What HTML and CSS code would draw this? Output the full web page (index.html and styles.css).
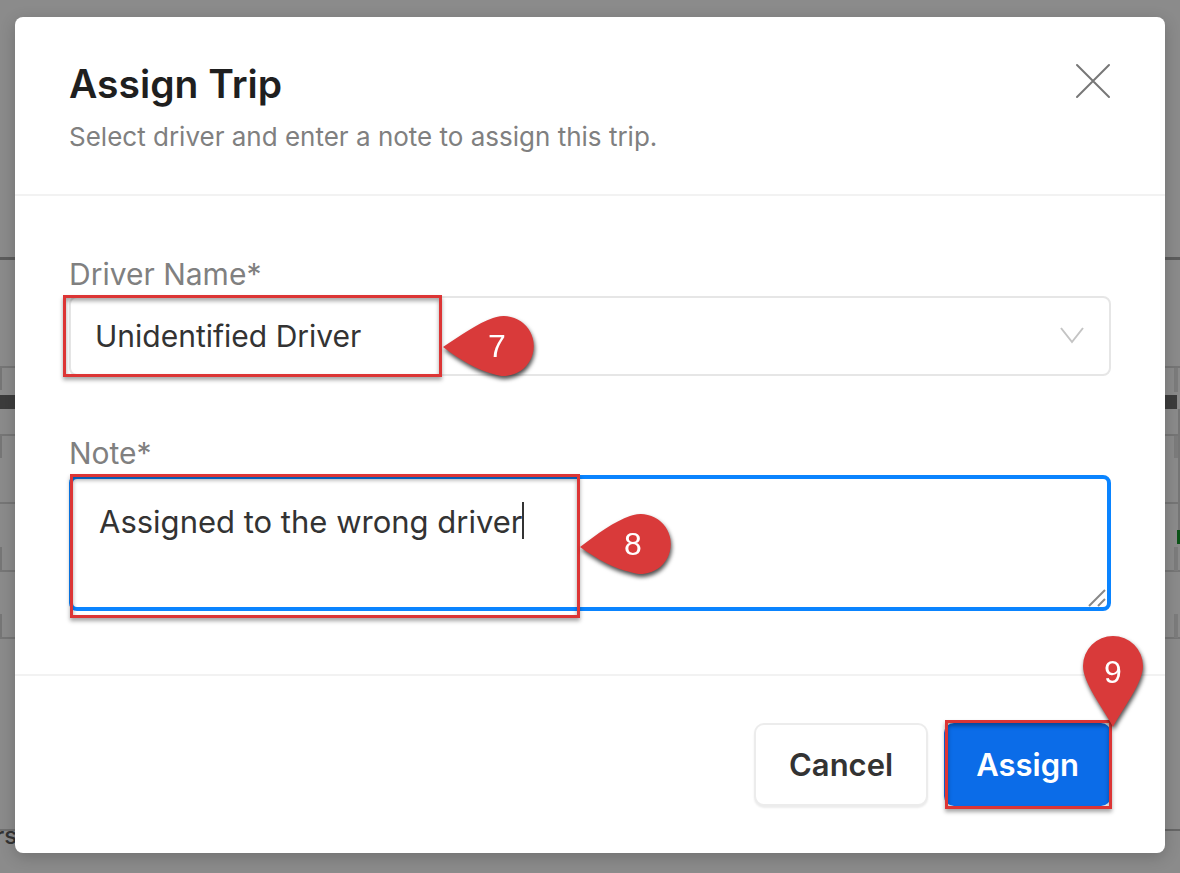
FILE: index.html
```html
<!DOCTYPE html>
<html lang="en">
<head>
<meta charset="utf-8">
<title>Assign Trip</title>
<link rel="stylesheet" href="styles.css">
</head>
<body>
<div class="backdrop" aria-hidden="true">
  <svg class="strip strip-left" width="16" height="873" viewBox="0 0 16 873">
    <g fill="#767676">
      <path d="M0 257h16v3H0z" fill="#5c5c5c"/>
      <path d="M0 366h16v2H0zM0 434h16v2H0zM0 502h16v2H0zM0 570h16v2H0zM0 637h16v2H0z"/>
      <path d="M0 368h2v22H0zM0 436h2v22H0zM0 547h2v24H0zM0 614h2v24H0z"/>
      <path d="M0 395h16v14H0z" fill="#3c3c3c"/>
      <path d="M0 829h16v2H0z" fill="#707070"/>
    </g>
  </svg>
  <span class="clipped-text">rs</span>
  <svg class="strip strip-right" width="16" height="873" viewBox="0 0 16 873">
    <g fill="#767676">
      <path d="M0 257h16v3H0z" fill="#5c5c5c"/>
      <path d="M0 366h16v2H0zM0 434h16v2H0zM0 502h16v2H0zM0 570h16v2H0zM0 637h16v2H0z"/>
      <path d="M10 368h4v24h-4zM10 436h4v22h-4zM10 547h4v24h-4zM10 614h4v24h-4z" fill="#7c7c7c"/>
      <path d="M14 409h2v121h-2z"/>
      <path d="M0 395h13v14H0z" fill="#3c3c3c"/>
      <path d="M13 530h3v14h-3z" fill="#0c5418"/>
      <path d="M0 829h16v2H0z" fill="#666"/>
    </g>
  </svg>
</div>

<form class="modal" role="dialog" aria-labelledby="title">
  <header class="modal-header">
    <div class="heading">
      <h1 class="title" id="title">Assign Trip</h1>
      <p class="subtitle">Select driver and enter a note to assign this trip.</p>
    </div>
    <button class="close" type="button" aria-label="Close">
      <svg width="36" height="36" viewBox="0 0 36 36" fill="none" stroke="#777" stroke-width="2" stroke-linecap="round"><path d="M2 2l32 32M34 2L2 34"/></svg>
    </button>
  </header>

  <div class="modal-body">
    <div class="field">
      <label class="label" for="driver">Driver Name*</label>
      <div class="control">
        <select class="select" id="driver"><option>Unidentified Driver</option></select>
        <svg class="chevron" width="24" height="18" viewBox="0 0 24 18" fill="none" stroke="#c4c4c4" stroke-width="2"><path d="M1 1l11 14L23 1"/></svg>
        <div class="outline outline-driver"></div>
        <svg class="pin pin-driver" width="96" height="68" viewBox="0 0 96 68">
          <path d="M1 33C18 22 36 9 51 4A30 30 0 1 1 51 60C36 56 18 46 1 33z" fill="#d93a3a"/>
          <text class="pin-text" x="55" y="43">7</text>
        </svg>
      </div>
    </div>
    <div class="field">
      <label class="label" for="note">Note*</label>
      <div class="control">
        <textarea class="textarea" id="note">Assigned to the wrong driver</textarea>
        <span class="caret"></span>
        <svg class="grip" width="18" height="18" viewBox="0 0 18 18" fill="none" stroke="#888" stroke-width="2"><path d="M1 17L17 1M10 17l7-7"/></svg>
        <div class="outline outline-note"></div>
        <svg class="pin pin-note" width="96" height="68" viewBox="0 0 96 68">
          <path d="M1 35C18 22 36 9 51 4A30 30 0 1 1 51 60C36 57 18 47 1 35z" fill="#d93a3a"/>
          <text class="pin-text" x="54" y="43">8</text>
        </svg>
      </div>
    </div>
  </div>

  <footer class="modal-footer">
    <button class="button" type="button">Cancel</button>
    <div class="control">
      <button class="button button-primary" type="submit">Assign</button>
      <div class="outline outline-assign"></div>
      <svg class="pin pin-assign" width="68" height="96" viewBox="0 0 68 96">
        <path d="M34 94C24 75 4 50 4 33A30 30 0 1 1 64 33C64 50 44 75 34 94z" fill="#d93a3a"/>
        <text class="pin-text" x="34" y="50">9</text>
      </svg>
    </div>
  </footer>
</form>
</body>
</html>
```
FILE: styles.css
```css
* {
  box-sizing: border-box;
}

body {
  margin: 0;
  min-height: 100vh;
  padding: 17px 15px 20px;
  background: #8b8b8b;
  color: #333;
  font-family: Inter, "Liberation Sans", sans-serif;
  overflow: hidden;
}

.backdrop {
  position: absolute;
  inset: 0;
  overflow: hidden;
}

.strip {
  position: absolute;
  top: 0;
}

.strip-left {
  left: 0;
}

.strip-right {
  right: 0;
}

.clipped-text {
  position: absolute;
  top: 820px;
  left: -5px;
  color: #333;
  font-size: 24px;
  font-weight: 500;
  line-height: 32px;
}

.modal {
  position: relative;
  background: #fff;
  border-radius: 8px;
  box-shadow: 0 4px 16px rgba(0, 0, 0, 0.2);
}

.modal-header {
  display: flex;
  justify-content: space-between;
  align-items: flex-start;
  padding: 43px 54px 39px;
  border-bottom: 2px solid #f2f2f2;
}

.heading {
  display: flex;
  flex-direction: column;
  gap: 11px;
}

.title {
  margin: 0;
  color: #1f1f1f;
  font-size: 39px;
  font-weight: 600;
  line-height: 48px;
}

.subtitle {
  margin: 0;
  color: #808080;
  font-size: 26px;
  line-height: 36px;
}

.close {
  display: flex;
  padding: 3px 0 0;
  border: 0;
  background: none;
}

.modal-body {
  display: flex;
  flex-direction: column;
  gap: 57px;
  padding: 58px 54px 63px;
}

.field {
  display: flex;
  flex-direction: column;
  gap: 2px;
}

.label {
  color: #808080;
  font-size: 30px;
  line-height: 40px;
}

.control {
  position: relative;
  display: flex;
}

.select,
.textarea {
  width: 100%;
  margin: 0;
  background: #fff;
  color: #333;
  font-family: inherit;
  font-size: 30px;
  border-radius: 8px;
  outline: none;
}

.select {
  appearance: none;
  height: 80px;
  padding: 0 24px;
  border: 2px solid #e6e6e6;
}

.textarea {
  height: 136px;
  padding: 23px 26px;
  border: 4px solid #0a84ff;
  font-size: 31px;
  line-height: 40px;
  resize: none;
}

.chevron {
  position: absolute;
  top: 31px;
  right: 27px;
}

.caret {
  position: absolute;
  top: 27px;
  left: 453px;
  width: 2px;
  height: 37px;
  background: #333;
}

.grip {
  position: absolute;
  right: 5px;
  bottom: 4px;
}

.modal-footer {
  display: flex;
  justify-content: flex-end;
  gap: 16px;
  padding: 47px 54px 47px;
  border-top: 2px solid #f2f2f2;
}

.button {
  height: 83px;
  padding: 0 33px;
  border: 2px solid #ececec;
  border-radius: 10px;
  background: #fff;
  box-shadow: 0 2px 2px rgba(0, 0, 0, 0.08);
  color: #333;
  font-family: inherit;
  font-size: 31px;
  font-weight: 600;
}

.button-primary {
  padding: 0 30px;
  border-color: #0b6ce8;
  background: #0b6ce8;
  color: #fff;
}

.outline {
  position: absolute;
  border: 3px solid #dc3535;
  box-shadow: 0 3px 4px rgba(0, 0, 0, 0.35), inset 0 3px 4px rgba(0, 0, 0, 0.35);
  pointer-events: none;
}

.outline-driver {
  top: -1px;
  left: -6px;
  width: 379px;
  height: 82px;
}

.outline-note {
  top: -1px;
  left: 1px;
  width: 510px;
  height: 144px;
}

.outline-assign {
  inset: -3px -1px -3px 1px;
}

.pin {
  position: absolute;
  overflow: visible;
  filter: drop-shadow(1px 3px 2px rgba(0, 0, 0, 0.7));
  pointer-events: none;
}

.pin-driver {
  top: 18px;
  left: 373px;
}

.pin-note {
  top: 37px;
  left: 510px;
}

.pin-assign {
  top: -90px;
  right: -36px;
}

.pin-text {
  fill: #fff;
  font-family: "Liberation Sans", Arial, sans-serif;
  font-size: 32px;
  text-anchor: middle;
}
```
